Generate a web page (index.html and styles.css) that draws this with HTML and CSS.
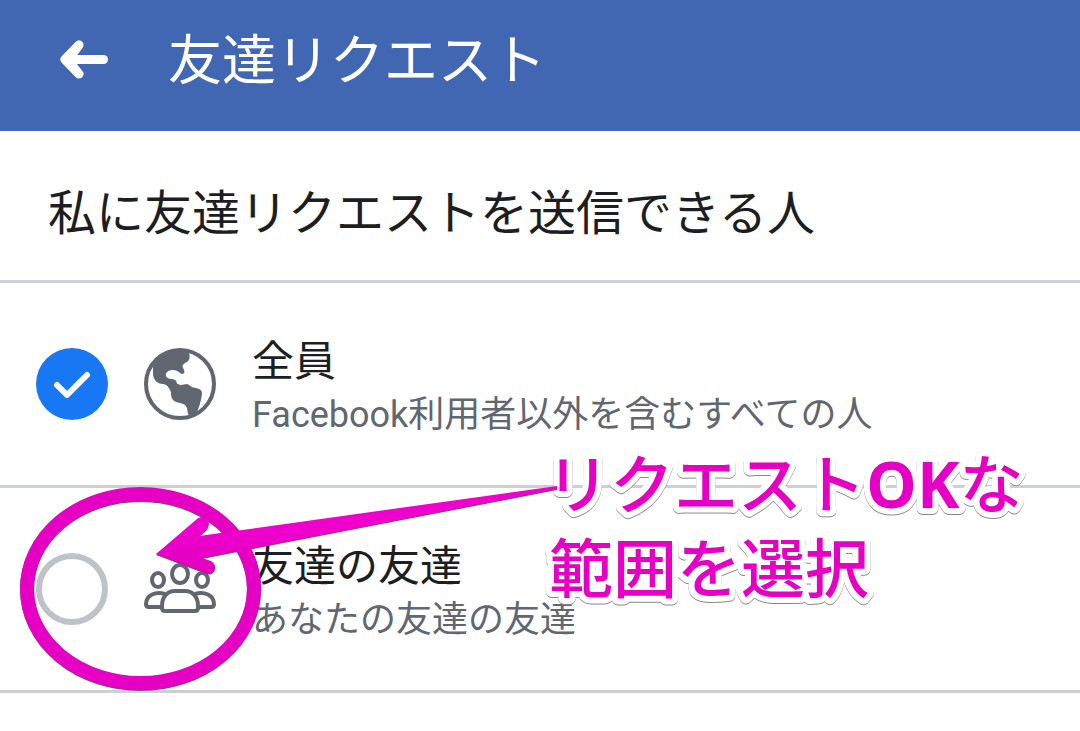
FILE: index.html
```html
<!DOCTYPE html>
<html lang="ja">
<head>
    <meta charset="UTF-8">
    <meta name="viewport" content="width=device-width, initial-scale=1.0">
    <title>友達リクエスト</title>
    <link rel="stylesheet" href="styles.css">
</head>
<body>

    <header class="topbar">
        <button class="back" type="button" aria-label="戻る">
            <svg viewBox="0 0 48 40" width="48" height="40">
                <path class="head" d="M19 5L5 19.500L19 34L8 20Z" />
                <path class="shaft" d="M7 19.500H43.500" />
            </svg>
        </button>
        <h1>友達リクエスト</h1>
    </header>

    <main>
        <h2 id="question">私に友達リクエストを送信できる人</h2>

        <div role="radiogroup" aria-labelledby="question">
            <label class="option" for="everyone">
                <span class="choice">
                    <input type="radio" name="audience" id="everyone" checked>
                    <svg class="check" viewBox="0 0 72 72" width="72" height="72">
                        <path d="M21 37L31 47L51 27" />
                    </svg>
                </span>
                <svg class="icon" viewBox="0 0 72 72" width="72" height="72">
                    <circle cx="36" cy="36" r="34" />
                    <path class="land" d="M45 4C46 9 46 12 43 14C39 16 38 17 39 20C41 23 41 26 38 26C35 25 34 22 29 22C24 22 21 25 22 28C24 32 28 30 31 32C34 33 31 35 34 36C37 38 40 36 43 36C46 37 48 40 52 40C56 41 58 42 58 46C57 53 55 61 51 68L45 68C43 65 44 61 42 58C39 54 33 56 29 52C26 48 28 45 26 42C24 38 22 36 18 36C12 35 9 31 9 25L9 16A34 34 0 0 1 45 4Z" />
                </svg>
                <span class="text">
                    <span class="name">全員</span>
                    <span class="note">Facebook利用者以外を含むすべての人</span>
                </span>
            </label>

            <label class="option" for="friends">
                <span class="choice">
                    <input type="radio" name="audience" id="friends">
                </span>
                <svg class="icon" viewBox="0 0 72 72" width="72" height="72">
                    <ellipse cx="14" cy="27" rx="6" ry="7" />
                    <ellipse cx="58" cy="27" rx="6" ry="7" />
                    <ellipse cx="36" cy="21" rx="8" ry="9" />
                    <path d="M21 41C12 38 2 42 2 51Q2 54 5 54H18M51 41C60 38 70 42 70 51Q70 54 67 54H54" />
                    <path d="M31 38H41C49 38 54 44 54 53V55Q54 58 51 58H21Q18 58 18 55V53C18 44 23 38 31 38Z" />
                </svg>
                <span class="text">
                    <span class="name">友達の友達</span>
                    <span class="note">あなたの友達の友達</span>
                </span>
            </label>
        </div>
    </main>

    <!-- handwritten hint over the list -->
    <svg class="hint" viewBox="0 0 1080 731" width="1080" height="731">
        <defs>
            <linearGradient id="pink" x1="0" y1="0" x2="0" y2="1">
                <stop offset="0.5" stop-color="#f000cd" />
                <stop offset="1" stop-color="#e000bf" />
            </linearGradient>
        </defs>
        <g class="hint-text">
            <text x="546" y="508">リクエスト<tspan class="latin">OK</tspan>な</text>
            <text x="549" y="592">範囲を選択</text>
        </g>
        <g class="marker">
            <ellipse cx="140.500" cy="588.500" rx="113.500" ry="94.500" />
            <path d="M156 554L197 519C205 513 213 522 206 530L199 536L557 486L557 489L202 558L211 561C219 566 214 576 206 573Z" />
        </g>
    </svg>

</body>
</html>
```
FILE: styles.css
```css
body {
    margin: 0;
    position: relative;
    overflow-x: hidden;
    background: #fff;
    color: #1c1e21;
    font-family: Roboto, "Noto Sans CJK JP", sans-serif;
}
.topbar {
    display: flex;
    align-items: flex-start;
    gap: 60px;
    padding: 0 60px;
    background: #4267b2;
    color: #fff;
}
.back {
    display: flex;
    margin-top: 40px;
    padding: 0;
    border: none;
    background: none;
    cursor: pointer;
}
.back path {
    fill: #fff;
    stroke: #fff;
    stroke-width: 9;
    stroke-linecap: round;
    stroke-linejoin: round;
}
h1 {
    margin: 0;
    padding-bottom: 8px;
    font-size: 54px;
    font-weight: 400;
    line-height: 123px;
}
h2 {
    margin: 0;
    padding: 47px 48px 30px;
    border-bottom: 3px solid #ccd0d5;
    font-size: 48px;
    font-weight: 400;
    line-height: 72px;
}
.option {
    display: flex;
    align-items: center;
    gap: 36px;
    padding: 48px 36px;
    border-bottom: 3px solid #ccd0d5;
    cursor: pointer;
}
.choice {
    display: grid;
}
.choice input,
.check {
    grid-area: 1 / 1;
}
.choice input {
    appearance: none;
    box-sizing: border-box;
    width: 72px;
    height: 72px;
    margin: 0;
    border: 6px solid #bec3c9;
    border-radius: 50%;
}
.choice input:checked {
    border: none;
    background: #1877f2;
}
.check {
    pointer-events: none;
}
.choice input:not(:checked) + .check {
    display: none;
}
.check path {
    fill: none;
    stroke: #fff;
    stroke-width: 6;
    stroke-linecap: round;
    stroke-linejoin: round;
}
.icon {
    flex: none;
    fill: #fff;
    stroke: #606770;
    stroke-width: 4;
}
.icon .land {
    fill: #606770;
    stroke: none;
}
.text {
    display: flex;
    flex-direction: column;
    padding-top: 4px;
}
.name {
    font-size: 42px;
    line-height: 54px;
}
.note {
    color: #606770;
    font-size: 36px;
    line-height: 52px;
    margin-bottom: -4px;
}
.hint {
    position: absolute;
    top: 0;
    left: 0;
    pointer-events: none;
}
.marker {
    filter: drop-shadow(0 1px 0 #7a4a75);
}
.marker ellipse {
    fill: none;
    stroke: #e600c4;
    stroke-width: 14;
}
.marker path {
    fill: url(#pink);
}
.hint-text {
    fill: #e600c4;
    font-family: "Noto Sans CJK JP", sans-serif;
    font-size: 64px;
    font-weight: 500;
    stroke: #fff;
    stroke-width: 12px;
    stroke-linejoin: round;
    paint-order: stroke fill;
    filter: drop-shadow(0 1px 0 #888);
}
.hint-text .latin {
    font-family: "Open Sans", sans-serif;
    font-weight: 700;
}
```
